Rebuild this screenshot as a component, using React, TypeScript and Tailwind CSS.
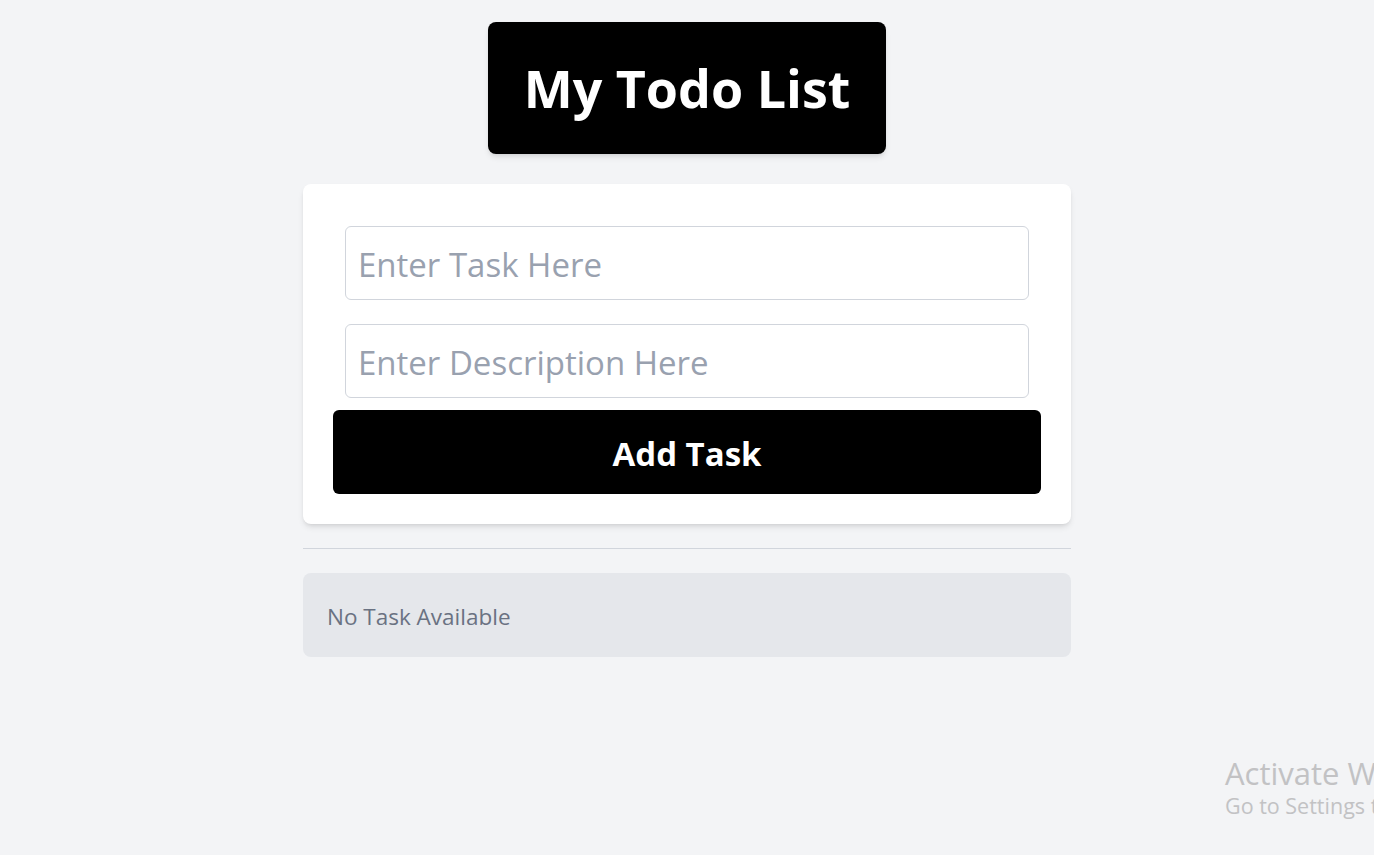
import React, { useState } from 'react';

function App() {
  const [task, setTask] = useState('');
  const [desc, setDesc] = useState('');
  const [tasks, setTasks] = useState<{ title: string; desc: string }[]>([]);

  const addTask = (e: React.FormEvent<HTMLFormElement>) => {
    e.preventDefault();
    if (!task) return;
    setTasks([...tasks, { title: task, desc }]);
    setTask('');
    setDesc('');
  };

  return (
    <div className="relative min-h-screen overflow-hidden bg-gray-100 font-['Open_Sans',sans-serif]">
      <div className="flex justify-center pt-[22px]">
        <h1 className="rounded-lg bg-black px-[36px] py-10 text-[52px] font-bold leading-[52px] text-white shadow-md">
          My Todo List
        </h1>
      </div>

      <div className="mx-auto mt-[30px] max-w-3xl">
        <form onSubmit={addTask} className="rounded-lg bg-white p-[30px] shadow-md">
          <input
            type="text"
            value={task}
            onChange={(e) => setTask(e.target.value)}
            placeholder="Enter Task Here"
            className="mx-3 mt-3 block h-[74px] w-[684px] rounded-md border border-gray-300 px-3 pt-[3px] text-[33px] text-gray-800 outline-none placeholder:text-gray-400"
          />
          <input
            type="text"
            value={desc}
            onChange={(e) => setDesc(e.target.value)}
            placeholder="Enter Description Here"
            className="mx-3 mt-6 block h-[74px] w-[684px] rounded-md border border-gray-300 px-3 pt-[3px] text-[33px] text-gray-800 outline-none placeholder:text-gray-400"
          />
          <button
            type="submit"
            className="mt-3 block h-[84px] w-full rounded-md bg-black pt-[3px] text-[33px] font-bold text-white"
          >
            Add Task
          </button>
        </form>

        <hr className="my-6 border-gray-300" />

        {tasks.length === 0 ? (
          <div className="flex h-[84px] items-center rounded-lg bg-gray-200 px-6 pt-[3px] text-[22.5px] text-gray-500">
            No Task Available
          </div>
        ) : (
          <ul className="space-y-3">
            {tasks.map((t, i) => (
              <li key={i} className="rounded-lg bg-white p-6 shadow">
                <h3 className="text-xl font-bold">{t.title}</h3>
                <p className="text-gray-600">{t.desc}</p>
              </li>
            ))}
          </ul>
        )}
      </div>

      <div className="pointer-events-none absolute left-[1225px] top-[754px] whitespace-nowrap text-[#c2c2c4]">
        <div className="text-[31px] leading-[38px]">Activate Windows</div>
        <div className="pt-[1px] text-[21.5px] leading-[26px]">Go to Settings to activate Windows.</div>
      </div>
    </div>
  );
}

export default App;
